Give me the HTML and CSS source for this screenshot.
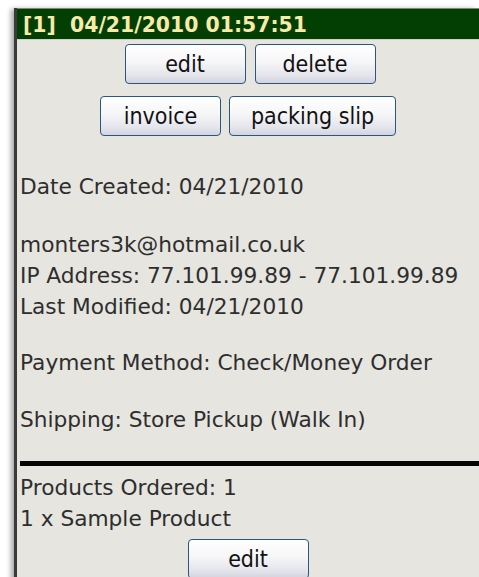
FILE: index.html
```html
<!DOCTYPE html>
<html lang="en">
<head>
<meta charset="utf-8">
<title>Order 1</title>
<link rel="stylesheet" href="styles.css">
</head>
<body>
<div class="order">
  <div class="order-head">[1]&nbsp; 04/21/2010 01:57:51</div>
  <div class="actions actions-first">
    <button class="btn btn-std">edit</button>
    <button class="btn btn-std">delete</button>
  </div>
  <div class="actions actions-second">
    <button class="btn btn-std">invoice</button>
    <button class="btn btn-wide">packing slip</button>
  </div>
  <div class="details">
    <p class="created">Date Created: 04/21/2010</p>
    <p class="contact">monters3k@hotmail.co.uk<br>IP Address: 77.101.99.89 - 77.101.99.89<br>Last Modified: 04/21/2010</p>
    <p class="payment">Payment Method: Check/Money Order</p>
    <p class="shipping">Shipping: Store Pickup (Walk In)</p>
  </div>
  <div class="rule"></div>
  <div class="products">Products Ordered: 1<br>1 x Sample Product</div>
  <div class="actions actions-bottom">
    <button class="btn btn-std">edit</button>
  </div>
</div>
</body>
</html>
```

FILE: styles.css
```css
html, body {
  margin: 0;
  padding: 0;
  background: #ffffff;
}

body {
  padding-top: 8px;
  padding-left: 14px;
  overflow: hidden;
}

.order {
  background: #e6e5e0;
  border-left: 3px solid #3a3a3a;
  box-shadow: -4px 0 5px -1px rgba(0, 0, 0, 0.35);
  min-height: 600px;
  font-family: "DejaVu Sans", Verdana, sans-serif;
  color: #2e2e2e;
}

.order-head {
  background: #033f03;
  color: #f8eaa8;
  font-weight: bold;
  font-size: 20.4px;
  height: 32px;
  line-height: 32px;
  padding-left: 6px;
  border-top: 1px solid #7a8a7a;
  border-bottom: 1px solid #cfcfca;
  box-sizing: border-box;
  white-space: pre;
}

.actions {
  display: flex;
  justify-content: center;
  gap: 8px;
  margin-top: 4px;
}

.actions-first {
  gap: 9px;
  padding-left: 4px;
}

.actions-second {
  margin-top: 12px;
}

.actions-bottom {
  margin-top: 5px;
}

.btn {
  height: 40px;
  border: 1px solid #2b5680;
  border-radius: 4px;
  background: linear-gradient(#ffffff 0%, #f6f6f8 45%, #e4e4ec 80%, #d4d4e0 100%);
  font-family: "DejaVu Sans Condensed", Tahoma, sans-serif;
  font-size: 23px;
  color: #111111;
  padding: 0;
  box-sizing: border-box;
}

.btn-std {
  width: 121px;
}

.btn-wide {
  width: 167px;
}

.details {
  padding-left: 3px;
  padding-top: 35px;
  font-size: 21.7px;
  line-height: 31px;
}

.details p {
  margin: 0;
}

.details .created {
  margin-bottom: 27px;
}

.details .contact {
  margin-bottom: 25px;
}

.details .payment {
  margin-bottom: 26px;
}

.rule {
  margin: 26px 0 0 3px;
  height: 5px;
  background: #050505;
}

.products {
  padding-left: 3px;
  margin-top: 6px;
  font-size: 21.7px;
  line-height: 31px;
}
```
